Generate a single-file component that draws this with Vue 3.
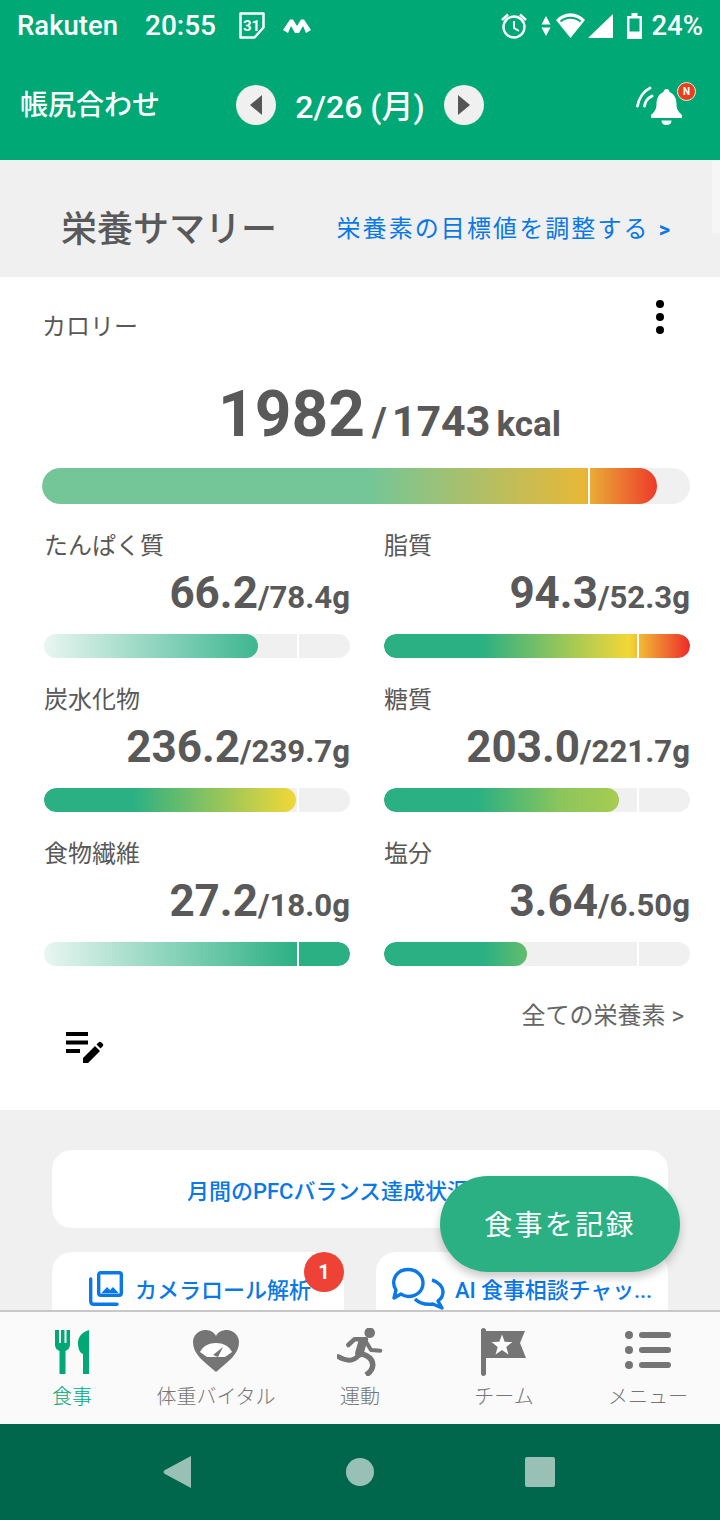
<template>
  <div class="screen">
    <header class="top">
      <div class="status">
        <span class="carrier">Rakuten</span>
        <span class="clock">20:55</span>
        <svg class="st-cal" width="28" height="30" viewBox="0 0 28 30">
          <path d="M2.500 2.500h23v14l-9 10h-14z" fill="none" stroke="#fff" stroke-width="2.500" stroke-linejoin="round" />
          <text x="13.500" y="19.500" text-anchor="middle" class="cal-num">31</text>
        </svg>
        <svg class="st-m" width="28" height="16" viewBox="0 0 28 16">
          <path d="M0 12 7 1.500h3L14 8l4-6.500h3L28 12l-5 3-3-7-4 7h-4L8 8l-3 7z" fill="#fff" />
        </svg>
        <span class="grow"></span>
        <svg width="28" height="30" viewBox="0 0 28 30">
          <circle cx="14" cy="16" r="10.500" fill="none" stroke="#fff" stroke-width="2.400" />
          <path d="M14 10v7l5 3" fill="none" stroke="#fff" stroke-width="2" />
          <path d="M2 9l6-5.500M26 9l-6-5.500" stroke="#fff" stroke-width="2.400" />
        </svg>
        <svg class="st-arrows" width="10" height="20" viewBox="0 0 10 20">
          <path d="M5 0 9.500 8.500H.5zM5 20 .5 11.500h9z" fill="#fff" />
        </svg>
        <svg class="st-wifi" width="29" height="25" viewBox="0 0 29 25">
          <path d="M0 7C8-2 21-2 29 7L14.500 25z" fill="#fff" />
          <path d="M4.500 8.500C10 3.500 19 3.500 24.500 8.500" fill="none" stroke="#00a876" stroke-width="1.800" />
        </svg>
        <svg class="st-signal" width="25" height="24" viewBox="0 0 25 24">
          <path d="M25 0v24H0z" fill="#fff" />
        </svg>
        <svg class="st-batt" width="15" height="26" viewBox="0 0 15 26">
          <path d="M4.500 0h6v3H15v23H0V3h4.500z" fill="#fff" />
          <rect x="2.500" y="5.500" width="10" height="13" fill="#00a876" />
        </svg>
        <span class="percent">24%</span>
      </div>
      <div class="head-row">
        <span class="head-title">帳尻合わせ</span>
        <div class="date-nav">
          <button class="round-btn">
            <svg width="12" height="20" viewBox="0 0 12 20"><path d="M12 0v20L0 10z" fill="#555" /></svg>
          </button>
          <span class="date">2/26 (月)</span>
          <button class="round-btn">
            <svg width="12" height="20" viewBox="0 0 12 20"><path d="M0 0v20l12-10z" fill="#555" /></svg>
          </button>
        </div>
        <div class="bell">
          <svg width="50" height="46" viewBox="0 0 50 46">
            <path d="M1.500 25C3 17 8 10 14 7M8.500 25c.5-4 3.500-8 7.500-10" fill="none" stroke="#fff" stroke-width="2.800" stroke-linecap="round" />
            <path d="M30.500 8c2 0 3 1.500 3 3 5 2 7 7 7 12 0 5 2 8 5.500 11v3H15v-3c3.500-3 5.500-6 5.500-11 0-5 2-10 7-12 0-1.500 1-3 3-3z" fill="#fff" />
            <path d="M25.500 39.500h10c0 3-2 4.500-5 4.500s-5-1.500-5-4.500z" fill="#fff" />
          </svg>
          <span class="bell-badge">N</span>
        </div>
      </div>
    </header>

    <main class="body">
      <div class="summary-head">
        <h1>栄養サマリー</h1>
        <a class="adjust">栄養素の目標値を調整する<b>&gt;</b></a>
        <span class="edge"></span>
      </div>

      <section class="card">
        <div class="card-top">
          <span class="card-label">カロリー</span>
          <span class="dots"><i></i><i></i><i></i></span>
        </div>
        <div class="kcal">
          <span class="kcal-main">1982</span><span class="kcal-slash">/</span><span class="kcal-goal">1743</span><span class="kcal-unit">kcal</span>
        </div>
        <div class="bar big">
          <div class="fill" :style="{ width: '94.9%', background: calorieGradient }"></div>
          <div class="tick" style="left: 84.2%"></div>
        </div>

        <div class="nutrients">
          <div v-for="n in nutrients" :key="n.name" class="nutrient">
            <div class="n-name">{{ n.name }}</div>
            <div class="n-value"><span class="n-main">{{ n.value }}</span><span class="n-goal">/{{ n.goal }}g</span></div>
            <div class="bar">
              <div class="fill" :style="{ width: n.width + '%', background: n.gradient }"></div>
              <div class="tick" :style="{ left: n.tick + '%' }"></div>
            </div>
          </div>
        </div>

        <div class="card-foot">
          <svg class="edit-list" width="40" height="32" viewBox="0 0 40 32">
            <path d="M2 1h22v4H2zM2 9.500h22v4H2zM2 18h14v4H2z" fill="#000" />
            <path d="M19 27l12-12 5 5-12 12h-5zM32.500 13.500l2-2c1-1 2-1 3 0l1 1c1 1 1 2 0 3l-2 2z" fill="#000" />
          </svg>
          <a class="all-link">全ての栄養素 &gt;</a>
        </div>
      </section>

      <div class="links">
        <a class="link-wide">月間のPFCバランス達成状況</a>
        <div class="link-row">
          <a class="link-half camera">
            <svg width="38" height="40" viewBox="0 0 38 40">
              <path d="M2.700 11v22c0 2.300 1 3.300 3.300 3.300h23" fill="none" stroke="#0a78e6" stroke-width="3.400" stroke-linecap="round" />
              <rect x="10.700" y="4.700" width="22.600" height="22.600" rx="2" fill="none" stroke="#0a78e6" stroke-width="3.400" />
              <path d="M13.500 25l5.500-6 3 3 3-3 5.500 6z" fill="#0a78e6" />
            </svg>
            <span>カメラロール解析</span>
            <em class="count">1</em>
          </a>
          <a class="link-half chat">
            <svg width="54" height="44" viewBox="0 0 54 44">
              <path d="M9 28 2 32l2-8c-1.500-2-2.300-4.500-2.300-7C1.700 9 8 3.500 16 3.500 24.500 3.500 31 9.500 31 17c0 8-6.500 13.500-15 13.500-2.500 0-5-1-7-2.500z" fill="none" stroke="#0a78e6" stroke-width="3.400" stroke-linejoin="round" />
              <path d="M40 14c7 2 11 7 11 12 0 4-2 7-5 9l4 7-9-4c-7 1-14-1-18-5" fill="none" stroke="#0a78e6" stroke-width="3.400" stroke-linejoin="round" />
            </svg>
            <span class="chat-text">AI 食事相談チャッ...</span>
          </a>
        </div>
      </div>

      <button class="fab"><span>食事を記録</span></button>
    </main>

    <nav class="tabs">
      <a class="tab active">
        <svg width="35" height="48" viewBox="0 0 35 48">
          <path d="M0 2h4v13h2V2h3.500v13h2V2H15v14c0 4-2 6-4.500 7v23h-6V23C2 22 0 20 0 16z" fill="#00a876" />
          <path d="M34 2v44h-6V26c-3-1-5-5-5-11 0-6 4-11 11-13z" fill="#00a876" />
        </svg>
        <span>食事</span>
      </a>
      <a class="tab">
        <svg width="46" height="48" viewBox="0 0 46 48">
          <path d="M23 44C10 33 0 26 0 14 0 7 6 2 12 2c5 0 9 2 11 6 2-4 6-6 11-6 6 0 12 5 12 12C46 26 36 33 23 44z" fill="#757575" />
          <path d="M7 24c3-6 9-9 16-9s13 3 16 9l-7 5H14z" fill="#fff" />
          <path d="M20 27l10-8-5 10z" fill="#757575" />
        </svg>
        <span>体重バイタル</span>
      </a>
      <a class="tab">
        <svg width="46" height="48" viewBox="0 0 46 48">
          <circle cx="32.700" cy="4.700" r="5.300" fill="#757575" />
          <path d="M11.300 17l6-5.700H29" fill="none" stroke="#757575" stroke-width="4.500" stroke-linecap="round" stroke-linejoin="round" />
          <path d="M29 13.700l5 8.300 9.300.7" fill="none" stroke="#757575" stroke-width="4" stroke-linecap="round" stroke-linejoin="round" />
          <path d="M25.700 13.700l-3.400 11.600" fill="none" stroke="#757575" stroke-width="8.500" stroke-linecap="round" />
          <path d="M22.300 25.300C20 32 12 35 1.300 28.700" fill="none" stroke="#757575" stroke-width="5" stroke-linecap="round" />
          <path d="M23 25.300c8 2 13 6 12.700 12-.2 4-2.700 7-6.700 9.700" fill="none" stroke="#757575" stroke-width="5.500" stroke-linecap="butt" />
        </svg>
        <span>運動</span>
      </a>
      <a class="tab">
        <svg width="46" height="48" viewBox="0 0 46 48">
          <path d="M2.500 0C4 0 5 1 5 2.500V3h39l-5 12 6 15H5v15.500C5 47 4 48 2.500 48S0 47 0 45.500v-43C0 1 1 0 2.500 0z" fill="#757575" />
          <path d="M21 6.500l2.650 7.360 7.810.24-6.180 4.790 2.190 7.510L21 22l-6.470 4.400 2.190-7.510-6.180-4.790 7.810-.24z" fill="#fff" />
        </svg>
        <span>チーム</span>
      </a>
      <a class="tab">
        <svg width="46" height="48" viewBox="0 0 46 48">
          <circle cx="4" cy="7" r="4" fill="#757575" /><rect x="14" y="4" width="32" height="6" rx="3" fill="#757575" />
          <circle cx="4" cy="22" r="4" fill="#757575" /><rect x="14" y="19" width="32" height="6" rx="3" fill="#757575" />
          <circle cx="4" cy="37" r="4" fill="#757575" /><rect x="14" y="34" width="32" height="6" rx="3" fill="#757575" />
        </svg>
        <span>メニュー</span>
      </a>
    </nav>

    <footer class="android">
      <svg width="30" height="32" viewBox="0 0 30 32"><path d="M28 0v32L2 18c-2-1-2-3 0-4z" fill="#99c0b5" /></svg>
      <svg class="home" width="28" height="28" viewBox="0 0 28 28"><circle cx="14" cy="14" r="14" fill="#99c0b5" /></svg>
      <svg class="recent" width="30" height="30" viewBox="0 0 30 30"><rect width="30" height="30" rx="2" fill="#99c0b5" /></svg>
    </footer>
  </div>
</template>

<script setup>
const green = '#2bb083'
const calorieGradient = 'linear-gradient(90deg, #74c698 0%, #74c698 53%, #e8b838 88%, #ee3a2a 100%)'
const fadeGradient = `linear-gradient(90deg, #e9f6f1 0%, #3db690 100%)`
const overGradient = `linear-gradient(90deg, ${green} 0%, ${green} 32%, #f2d838 80%, #ee2a2a 100%)`
const midGradient = `linear-gradient(90deg, ${green} 0%, ${green} 35%, #f2d838 100%)`

const nutrients = [
  { name: 'たんぱく質', value: '66.2', goal: '78.4', width: 70, tick: 82.7, gradient: fadeGradient },
  { name: '脂質', value: '94.3', goal: '52.3', width: 100, tick: 82.7, gradient: overGradient },
  { name: '炭水化物', value: '236.2', goal: '239.7', width: 82.5, tick: 82.7, gradient: midGradient },
  { name: '糖質', value: '203.0', goal: '221.7', width: 76.8, tick: 82.7, gradient: `linear-gradient(90deg, ${green} 0%, ${green} 40%, #8cc55c 75%, #a8cc50 100%)` },
  { name: '食物繊維', value: '27.2', goal: '18.0', width: 100, tick: 82.7, gradient: `linear-gradient(90deg, #e9f6f1 0%, ${green} 83%, ${green} 100%)` },
  { name: '塩分', value: '3.64', goal: '6.50', width: 46.7, tick: 82.7, gradient: `linear-gradient(90deg, ${green} 0%, ${green} 70%, #62bd6c 100%)` }
]
</script>

<style>
html, body {
  margin: 0;
  background: #f0f0f0;
}
</style>

<style scoped>
.screen {
  position: relative;
  width: 720px;
  height: 1520px;
  display: flex;
  flex-direction: column;
  overflow: hidden;
  font-family: Roboto, "Noto Sans CJK JP", sans-serif;
  color: #595959;
}

.top {
  height: 160px;
  flex: none;
  background: #00a876;
  color: #fff;
}

.status {
  height: 50px;
  display: flex;
  align-items: center;
  padding: 1px 17px 0;
  box-sizing: border-box;
  font-size: 27.5px;
  font-weight: 500;
}

.clock {
  margin-left: 27px;
  font-size: 28px;
}

.st-cal {
  margin-left: 22px;
}

.cal-num {
  font-size: 15px;
  font-weight: 700;
  fill: #fff;
}

.st-m {
  margin-left: 17px;
}

.grow {
  flex: 1;
}

.st-arrows {
  margin-left: 13px;
}

.st-wifi {
  margin-left: 5px;
}

.st-signal {
  margin-left: 3px;
}

.st-batt {
  margin-left: 14px;
}

.percent {
  margin-left: 9px;
}

.head-row {
  height: 110px;
  position: relative;
  display: flex;
  align-items: center;
  box-sizing: border-box;
  padding-left: 20px;
}

.head-title {
  width: 216px;
  margin-bottom: 4px;
  font-size: 28px;
  font-weight: 500;
}

.date-nav {
  display: flex;
  align-items: center;
}

.round-btn {
  width: 40px;
  height: 40px;
  border: none;
  border-radius: 50%;
  background: #f0f0f0;
  padding: 0;
  display: flex;
  align-items: center;
  justify-content: center;
}

.date {
  width: 168px;
  margin-bottom: 2px;
  text-align: center;
  font-size: 32px;
  font-weight: 500;
}

.bell {
  position: absolute;
  left: 636px;
  top: 31px;
}

.bell-badge {
  position: absolute;
  left: 41px;
  top: 1px;
  width: 19px;
  height: 19px;
  border-radius: 50%;
  background: #e8401c;
  border: 1px solid #f4e8d8;
  box-sizing: border-box;
  font-size: 10px;
  font-weight: 700;
  line-height: 17px;
  text-align: center;
}

.body {
  flex: 1;
  min-height: 0;
  overflow: hidden;
  background: #f0f0f0;
}

.summary-head {
  position: relative;
  height: 117px;
  display: flex;
  align-items: center;
  padding: 36px 50px 21px 61px;
  box-sizing: border-box;
  justify-content: space-between;
}

h1 {
  margin: 0;
  font-size: 36px;
  font-weight: 500;
  color: #595959;
}

.adjust {
  font-size: 24px;
  letter-spacing: 2.1px;
  color: #0a78e6;
}

.adjust b {
  margin-left: 9px;
  font-size: 22px;
  letter-spacing: 0;
}

.edge {
  position: absolute;
  right: 0;
  top: 0;
  width: 8px;
  height: 73px;
  background: #f6f6f6;
}

.card {
  background: #fff;
  height: 833px;
  box-sizing: border-box;
  padding: 26px 30px 0 42px;
}

.card-top {
  display: flex;
  justify-content: space-between;
  align-items: flex-start;
  height: 44px;
}

.card-label {
  font-size: 24px;
  line-height: 44px;
  margin-top: 2px;
}

.dots {
  display: flex;
  flex-direction: column;
  gap: 5px;
  margin: -3px 26px 0 0;
}

.dots i {
  width: 8px;
  height: 8px;
  background: #000;
  border-radius: 50%;
}

.kcal {
  margin-top: 34px;
  height: 67px;
  display: flex;
  justify-content: center;
  align-items: baseline;
  line-height: 67px;
  font-weight: 700;
  padding-left: 47px;
}

.kcal-main {
  font-size: 64px;
}

.kcal-slash {
  margin-left: 7px;
  font-size: 40px;
}

.kcal-goal {
  margin-left: 5px;
  font-size: 43px;
}

.kcal-unit {
  margin-left: 6px;
  font-size: 35px;
}

.bar {
  position: relative;
  height: 24px;
  border-radius: 12px;
  background: #f0f0f0;
  overflow: hidden;
}

.bar.big {
  height: 36px;
  border-radius: 18px;
  margin-top: 20px;
}

.fill {
  height: 100%;
  border-radius: inherit;
}

.tick {
  position: absolute;
  top: 0;
  bottom: 0;
  width: 2px;
  background: #fff;
}

.nutrients {
  display: grid;
  grid-template-columns: 306px 306px;
  column-gap: 34px;
  margin: 23px 0 0 2px;
  row-gap: 22px;
}

.nutrient {
  height: 132px;
}

.n-name {
  font-size: 24px;
  line-height: 36px;
  padding-top: 1px;
}

.n-value {
  text-align: right;
  height: 52px;
  line-height: 52px;
  font-weight: 700;
  margin-top: 3px;
  margin-bottom: 15px;
  white-space: nowrap;
}

.n-main {
  font-size: 44px;
}

.n-goal {
  font-size: 31.2px;
}

.card-foot {
  position: relative;
  height: 60px;
  margin-top: 31px;
}

.edit-list {
  position: absolute;
  left: 22px;
  top: 33px;
}

.all-link {
  position: absolute;
  right: 6px;
  top: 0;
  font-size: 24px;
  line-height: 36px;
  color: #666;
}

.links {
  padding: 40px 52px 0;
  display: flex;
  flex-direction: column;
  gap: 24px;
}

.link-wide {
  height: 78px;
  background: #fff;
  border-radius: 20px;
  display: flex;
  align-items: center;
  justify-content: center;
  padding-right: 64px;
  box-sizing: border-box;
  font-size: 22px;
  font-weight: 500;
  color: #0a78e6;
}

.link-row {
  display: flex;
  justify-content: space-between;
}

.link-half {
  position: relative;
  width: 292px;
  height: 78px;
  box-sizing: border-box;
  padding-bottom: 6px;
  background: #fff;
  border-radius: 20px;
  display: flex;
  align-items: center;
  font-size: 22px;
  font-weight: 500;
  color: #0a78e6;
  white-space: nowrap;
}

.camera {
  padding-left: 36px;
  gap: 9px;
}

.chat {
  padding-left: 16px;
  gap: 9px;
}

.chat-text {
  letter-spacing: -0.1px;
}

.count {
  position: absolute;
  left: 252px;
  top: 0;
  width: 40px;
  height: 40px;
  border-radius: 50%;
  background: #ef4236;
  color: #fff;
  font-style: normal;
  font-size: 20px;
  font-weight: 700;
  line-height: 40px;
  text-align: center;
}

.fab {
  position: absolute;
  left: 440px;
  top: 1176px;
  width: 240px;
  height: 96px;
  border: none;
  padding: 0 0 3px;
  border-radius: 48px;
  background: #2bb083;
  color: #fff;
  font-family: inherit;
  font-size: 28px;
  letter-spacing: 2.3px;
  box-shadow: 0 5px 10px rgba(0, 0, 0, 0.22);
}

.tabs {
  flex: none;
  height: 114px;
  box-sizing: border-box;
  border-top: 2px solid #c8c8c8;
  background: #fafafa;
  display: grid;
  grid-template-columns: repeat(5, 144px);
  position: relative;
}

.tab {
  display: flex;
  flex-direction: column;
  align-items: center;
  padding-top: 16px;
  font-size: 20px;
  font-weight: 300;
  color: #757575;
  height: 112px;
  box-sizing: border-box;
  position: relative;
}

.tab svg {
  flex: none;
}

.tab span {
  margin-top: 6px;
  line-height: 30px;
}

.tab.active {
  color: #00a876;
}

.android {
  flex: none;
  height: 96px;
  background: #00664c;
  display: flex;
  align-items: center;
  padding-left: 163px;
}

.home {
  margin-left: 153px;
}

.recent {
  margin-left: 151px;
}
</style>
